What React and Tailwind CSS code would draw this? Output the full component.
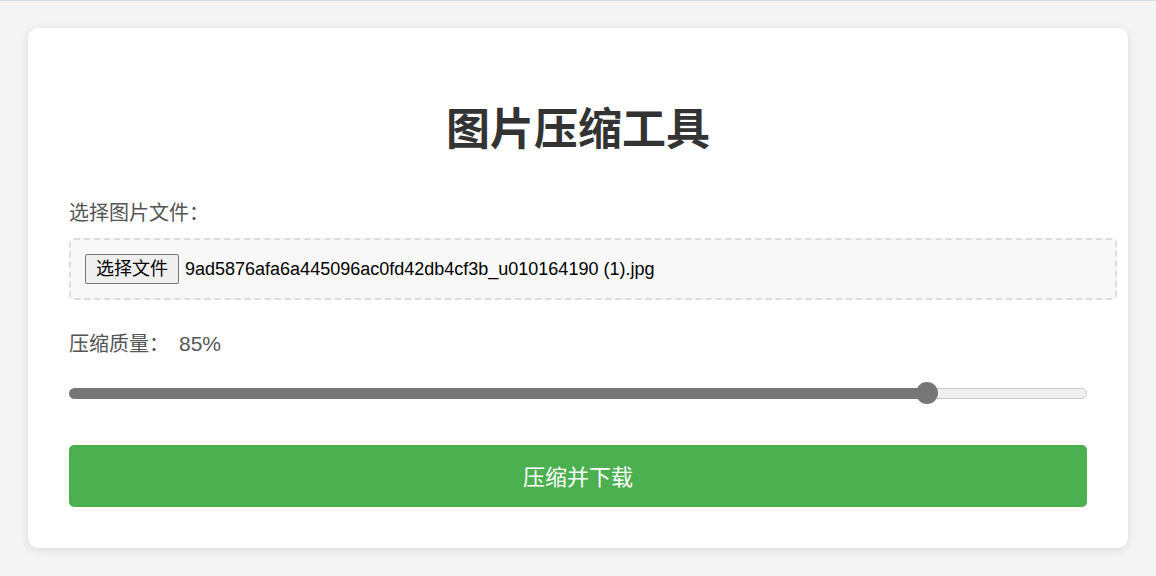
import React, { useState } from 'react';

const App = () => {
  const [quality] = useState(85);
  const fileName = '9ad5876afa6a445096ac0fd42db4cf3b_u010164190 (1).jpg';

  return (
    <div
      className="min-h-[576px] bg-[#f4f4f4] border-t border-[#d3dce6] pt-[27px] px-[28px] pb-[28px]"
      style={{ fontFamily: '"Liberation Sans", "Noto Sans CJK SC", sans-serif' }}
    >
      <div className="bg-white rounded-[10px] shadow-[0_2px_10px_rgba(0,0,0,0.1)] px-[41px] pt-[40px] pb-[41px]">
        <h1 className="mt-[36px] text-center text-[44px] leading-[52px] font-bold text-[#333]">
          图片压缩工具
        </h1>

        <label className="block mt-[43px] text-[20px] leading-[28px] text-[#555]">选择图片文件：</label>
        <div className="mt-[11px] -mr-[30px] border-2 border-dashed border-[#dddddd] rounded-[5px] bg-[#f8f8f8] px-[14px] py-[14px] flex items-center">
          <button className="h-[30px] px-[10px] bg-[#efefef] border border-[#767676] rounded-[2px] text-[18px] text-black leading-none">
            选择文件
          </button>
          <span className="ml-[6px] text-[18px] text-black">{fileName}</span>
        </div>

        <label className="block mt-[30px] text-[20px] leading-[28px] text-[#555]">
          压缩质量：<span className="ml-[10px] text-[21px]">{quality}%</span>
        </label>
        <div className="relative mt-[25px] h-[20px] flex items-center">
          <div className="flex w-full h-[11px]">
            <div
              className="h-full bg-[#767676] rounded-l-full"
              style={{ width: `calc(${quality / 100} * (100% - 22px) + 11px)` }}
            />
            <div className="h-full flex-1 bg-[#efefef] border border-[#c8c8c8] rounded-r-full" />
          </div>
          <div
            className="absolute top-[-1px] w-[22px] h-[22px] rounded-full bg-[#767676]"
            style={{ left: `calc(${quality / 100} * (100% - 22px))` }}
          />
        </div>

        <button className="mt-[42px] w-full h-[62px] pt-[3px] rounded-[5px] bg-[#4caf50] text-white text-[22px]">
          压缩并下载
        </button>
      </div>
    </div>
  );
};

export default App;
